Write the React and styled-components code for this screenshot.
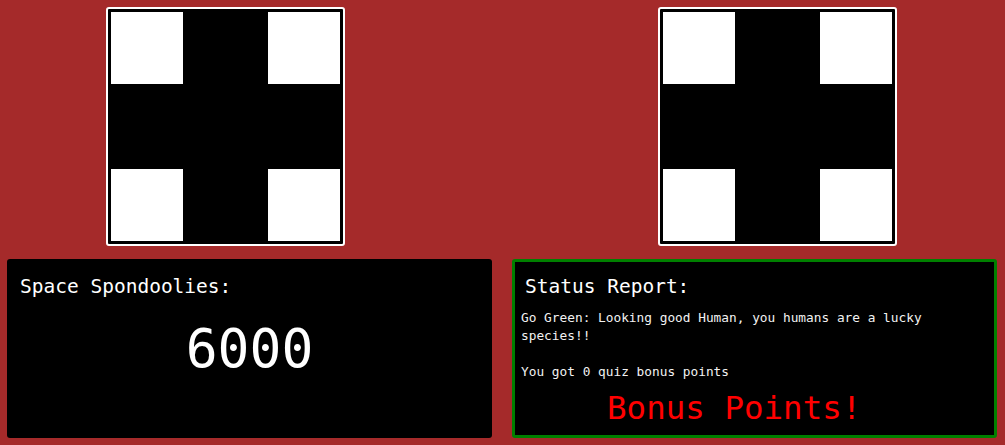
import styled, { createGlobalStyle } from 'styled-components';

const GlobalStyle = createGlobalStyle`
  html, body {
    margin: 0;
    padding: 0;
    background: #a52a2a;
  }
  body {
    font-family: 'DejaVu Sans Mono', 'Liberation Mono', monospace;
    color: #fff;
  }
`;

const Page = styled.div`
  width: 1005px;
  height: 445px;
  box-sizing: border-box;
  padding: 7px 8px 7px 7px;
  display: flex;
  flex-direction: column;
  gap: 13px;
`;

const ImageRow = styled.div`
  display: flex;
  justify-content: space-between;
  padding: 0 100px 0 99px;
`;

const Frame = styled.div`
  width: 229px;
  height: 229px;
  padding: 3px;
  background: #000;
  border: 2px solid #fff;
  border-radius: 3px;
`;

const PanelRow = styled.div`
  display: grid;
  grid-template-columns: 1fr 1fr;
  gap: 20px;
  height: 179px;
`;

const Panel = styled.div`
  background: #000;
  border-radius: 3px;
  box-sizing: border-box;
  border: ${({ $border }) => ($border ? `3px solid ${$border}` : 'none')};
  padding: ${({ $border }) => ($border ? '13px 6px 0' : '16px 13px 0')};
  display: flex;
  flex-direction: column;
`;

const Title = styled.h2`
  margin: 0 0 0 ${({ $indent }) => $indent || 0}px;
  font-size: 19.5px;
  font-weight: normal;
  line-height: 23px;
`;

const BigNumber = styled.div`
  margin-top: 21px;
  text-align: center;
  font-size: 53px;
  line-height: 60px;
`;

const Message = styled.p`
  margin: 11px 0 0;
  font-size: 12.8px;
  line-height: 18px;
  color: #f2f2f2;
`;

const Bonus = styled.div`
  margin: 8px 0 0 86px;
  font-size: 32.5px;
  line-height: 38px;
  color: #f00;
`;

const Cross = () => (
  <svg width="229" height="229" viewBox="0 0 229 229">
    <rect width="229" height="229" fill="#000" />
    <rect x="0" y="0" width="72" height="72" fill="#fff" />
    <rect x="157" y="0" width="72" height="72" fill="#fff" />
    <rect x="0" y="157" width="72" height="72" fill="#fff" />
    <rect x="157" y="157" width="72" height="72" fill="#fff" />
  </svg>
);

export default function App() {
  return (
    <>
      <GlobalStyle />
      <Page>
        <ImageRow>
          <Frame><Cross /></Frame>
          <Frame><Cross /></Frame>
        </ImageRow>
        <PanelRow>
          <Panel>
            <Title>Space Spondoolies:</Title>
            <BigNumber>6000</BigNumber>
          </Panel>
          <Panel $border="#008000">
            <Title $indent={4}>Status Report:</Title>
            <Message>
              Go Green: Looking good Human, you humans are a lucky species!!
              <br />
              <br />
              You got 0 quiz bonus points
            </Message>
            <Bonus>Bonus Points!</Bonus>
          </Panel>
        </PanelRow>
      </Page>
    </>
  );
}
